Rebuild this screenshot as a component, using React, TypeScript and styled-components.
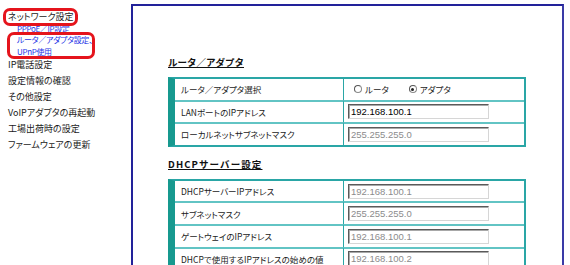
import React from "react";
import styled, { createGlobalStyle } from "styled-components";

const GlobalStyle = createGlobalStyle`
  html, body {
    margin: 0;
    padding: 0;
    background: #ffffff;
    overflow: hidden;
  }
  body {
    font-family: "Noto Sans CJK JP", "Noto Sans", sans-serif;
    font-feature-settings: "palt";
  }
`;

const Page = styled.div`
  display: flex;
  align-items: flex-start;
  width: 570px;
  height: 265px;
  overflow: hidden;
`;

const Sidebar = styled.nav`
  position: relative;
  width: 131px;
  flex-shrink: 0;
  box-sizing: border-box;
  padding: 9px 0 0 8px;
  display: flex;
  flex-direction: column;
`;

const NavItem = styled.div<{ $gap?: number }>`
  font-size: 9px;
  line-height: 15.9px;
  color: #1a1a1a;
  white-space: nowrap;
  margin-top: ${(p) => p.$gap ?? 0}px;
`;

const SubList = styled.div`
  display: flex;
  flex-direction: column;
  margin-top: -2px;
  padding-left: 9px;
`;

const SubItem = styled.div`
  font-size: 8px;
  line-height: 11.4px;
  letter-spacing: -0.35px;
  color: #1f35e6;
  white-space: nowrap;
`;

const Highlight = styled.div<{ $l: number; $t: number; $w: number; $h: number }>`
  position: absolute;
  left: ${(p) => p.$l}px;
  top: ${(p) => p.$t}px;
  width: ${(p) => p.$w}px;
  height: ${(p) => p.$h}px;
  box-sizing: border-box;
  border: 3px solid #e5141c;
  border-radius: 7px;
  pointer-events: none;
`;

const Panel = styled.main`
  margin-top: 4px;
  width: 433px;
  height: 290px;
  flex-shrink: 0;
  box-sizing: border-box;
  border: 2px solid #22229a;
  border-right-color: #3a3aa6;
  background: #ffffff;
  padding: 49px 0 0 35px;
  display: flex;
  flex-direction: column;
  align-items: flex-start;
`;

const SectionTitle = styled.h2<{ $top?: number; $spacing?: number }>`
  margin: ${(p) => p.$top ?? 0}px 0 8px 0;
  font-size: 9.5px;
  line-height: 14px;
  font-weight: bold;
  font-feature-settings: normal;
  letter-spacing: ${(p) => p.$spacing ?? 0}px;
  text-decoration: underline;
  color: #111;
`;

const SettingsTable = styled.table`
  width: 358px;
  border-collapse: separate;
  border-spacing: 0;
  border-top: 2px solid #2aa6a6;
  border-right: 2px solid #2aa6a6;
  border-bottom: 2px solid #2aa6a6;
  border-left: 7px solid #17998f;
  box-sizing: border-box;
`;

const Row = styled.tr`
  & + & > td {
    border-top: 2px solid #62c4c4;
  }
`;

const LabelCell = styled.td`
  width: 162px;
  height: 20.6px;
  padding: 0 0 0 6px;
  border-right: 1px solid #2aa6a6;
  font-size: 8.5px;
  line-height: 12px;
  color: #1a1a1a;
  white-space: nowrap;
  vertical-align: middle;
`;

const ValueCell = styled.td<{ $pad?: number }>`
  height: 20.6px;
  padding: 0 0 0 ${(p) => p.$pad ?? 4}px;
  line-height: 12px;
  vertical-align: middle;
`;

const TextBox = styled.input<{ $muted?: boolean }>`
  display: block;
  width: 141px;
  height: 15px;
  box-sizing: border-box;
  margin: 0;
  padding: 0 2px;
  border: 1px solid;
  border-color: #5a5a5a #d6d6d6 #d6d6d6 #5a5a5a;
  box-shadow: inset 1px 1px 0 #a8a8a8;
  background: #fff;
  font-family: "Liberation Sans", Arial, sans-serif;
  font-size: 9.5px;
  color: ${(p) => (p.$muted ? "#8c8c8c" : "#000")};
  outline: none;
`;

const RadioGroup = styled.div`
  display: flex;
  align-items: center;
  gap: 20px;
`;

const RadioOption = styled.label`
  display: flex;
  align-items: center;
  gap: 3px;
  font-size: 8.5px;
  color: #1a1a1a;
`;

const RadioDot = styled.span<{ $checked?: boolean }>`
  position: relative;
  width: 8px;
  height: 8px;
  box-sizing: border-box;
  border-radius: 50%;
  border: 1px solid #8a8a8a;
  border-top-color: #555;
  border-left-color: #555;
  background: #fff;
  &::after {
    content: "";
    display: ${(p) => (p.$checked ? "block" : "none")};
    position: absolute;
    left: 1.5px;
    top: 1.5px;
    width: 3px;
    height: 3px;
    border-radius: 50%;
    background: #222;
  }
`;

const dhcpRows = [
  { label: "DHCPサーバーIPアドレス", value: "192.168.100.1" },
  { label: "サブネットマスク", value: "255.255.255.0" },
  { label: "ゲートウェイのIPアドレス", value: "192.168.100.1" },
  { label: "DHCPで使用するIPアドレスの始めの値", value: "192.168.100.2" },
];

export default function App() {
  return (
    <>
      <GlobalStyle />
      <Page>
        <Sidebar>
          <NavItem>ネットワーク設定</NavItem>
          <SubList>
            <SubItem>PPPoE／IP設定</SubItem>
            <SubItem>ルータ／アダプタ設定、</SubItem>
            <SubItem>UPnP使用</SubItem>
          </SubList>
          <NavItem $gap={0}>IP電話設定</NavItem>
          <NavItem>設定情報の確認</NavItem>
          <NavItem>その他設定</NavItem>
          <NavItem>VoIPアダプタの再起動</NavItem>
          <NavItem>工場出荷時の設定</NavItem>
          <NavItem>ファームウェアの更新</NavItem>
          <Highlight $l={3} $t={8} $w={75} $h={18} />
          <Highlight $l={7} $t={32} $w={88} $h={27} />
        </Sidebar>
        <Panel>
          <SectionTitle>ルータ／アダプタ</SectionTitle>
          <SettingsTable>
            <tbody>
              <Row>
                <LabelCell>ルータ／アダプタ選択</LabelCell>
                <ValueCell $pad={10}>
                  <RadioGroup>
                    <RadioOption>
                      <RadioDot />
                      ルータ
                    </RadioOption>
                    <RadioOption>
                      <RadioDot $checked />
                      アダプタ
                    </RadioOption>
                  </RadioGroup>
                </ValueCell>
              </Row>
              <Row>
                <LabelCell>LANポートのIPアドレス</LabelCell>
                <ValueCell>
                  <TextBox readOnly value="192.168.100.1" />
                </ValueCell>
              </Row>
              <Row>
                <LabelCell>ローカルネットサブネットマスク</LabelCell>
                <ValueCell>
                  <TextBox readOnly $muted value="255.255.255.0" />
                </ValueCell>
              </Row>
            </tbody>
          </SettingsTable>
          <SectionTitle $top={10} $spacing={1.1}>DHCPサーバー設定</SectionTitle>
          <SettingsTable>
            <tbody>
              {dhcpRows.map((r) => (
                <Row key={r.label}>
                  <LabelCell>{r.label}</LabelCell>
                  <ValueCell>
                    <TextBox readOnly $muted value={r.value} />
                  </ValueCell>
                </Row>
              ))}
            </tbody>
          </SettingsTable>
        </Panel>
      </Page>
    </>
  );
}
